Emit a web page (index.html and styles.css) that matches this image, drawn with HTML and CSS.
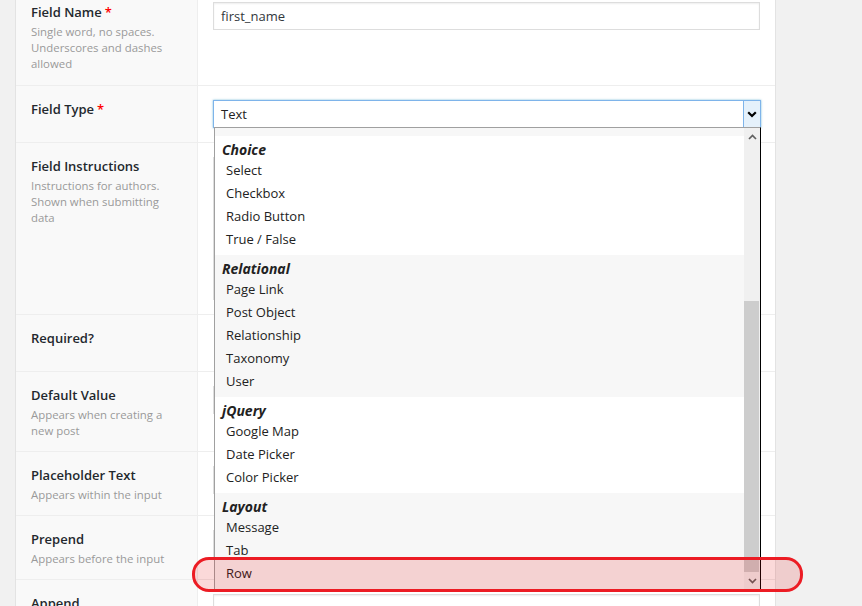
FILE: index.html
```html
<!DOCTYPE html>
<html lang="en">
<head>
<meta charset="utf-8">
<title>Field settings</title>
<link rel="stylesheet" href="styles.css">
</head>
<body>
<div class="wrap">
  <div class="settings">
    <div class="row first">
      <div class="label">
        <div class="lt">Field Name<span class="req">*</span></div>
        <div class="desc">Single word, no spaces.<br>Underscores and dashes<br>allowed</div>
      </div>
      <div class="field tight">
        <div class="input">first_name</div>
      </div>
    </div>
    <div class="row">
      <div class="label">
        <div class="lt">Field Type<span class="req">*</span></div>
      </div>
      <div class="field">
        <div class="select-wrap">
          <div class="select">
            <span class="sel-text">Text</span>
            <span class="sel-btn">
              <svg width="10" height="7" viewBox="0 0 10 7"><polyline points="1.2,1.2 5,5 8.8,1.2" fill="none" stroke="#000" stroke-width="2.2"/></svg>
            </span>
          </div>
          <div class="listbox">
            <div class="list">
              <div class="tail"></div>
              <div class="group">
                <div class="gh">Choice</div>
                <div class="opt">Select</div>
                <div class="opt">Checkbox</div>
                <div class="opt">Radio Button</div>
                <div class="opt">True / False</div>
              </div>
              <div class="group alt">
                <div class="gh">Relational</div>
                <div class="opt">Page Link</div>
                <div class="opt">Post Object</div>
                <div class="opt">Relationship</div>
                <div class="opt">Taxonomy</div>
                <div class="opt">User</div>
              </div>
              <div class="group">
                <div class="gh">jQuery</div>
                <div class="opt">Google Map</div>
                <div class="opt">Date Picker</div>
                <div class="opt">Color Picker</div>
              </div>
              <div class="group alt">
                <div class="gh">Layout</div>
                <div class="opt">Message</div>
                <div class="opt">Tab</div>
                <div class="opt">Row</div>
              </div>
            </div>
            <div class="scrollbar">
              <div class="sb-btn">
                <svg width="9" height="6" viewBox="0 0 9 6"><polyline points="1,5 4.5,1.5 8,5" fill="none" stroke="#606060" stroke-width="1.7"/></svg>
              </div>
              <div class="track"><div class="thumb"></div></div>
              <div class="sb-btn">
                <svg width="9" height="6" viewBox="0 0 9 6"><polyline points="1,1 4.5,4.5 8,1" fill="none" stroke="#606060" stroke-width="1.7"/></svg>
              </div>
            </div>
          </div>
        </div>
      </div>
    </div>
    <div class="row">
      <div class="label">
        <div class="lt">Field Instructions</div>
        <div class="desc">Instructions for authors.<br>Shown when submitting<br>data</div>
      </div>
      <div class="field">
        <div class="textarea"></div>
      </div>
    </div>
    <div class="row">
      <div class="label">
        <div class="lt">Required?</div>
      </div>
      <div class="field">
        <div class="spacer"></div>
      </div>
    </div>
    <div class="row">
      <div class="label">
        <div class="lt">Default Value</div>
        <div class="desc">Appears when creating a<br>new post</div>
      </div>
      <div class="field">
        <div class="input"></div>
      </div>
    </div>
    <div class="row">
      <div class="label">
        <div class="lt">Placeholder Text</div>
        <div class="desc">Appears within the input</div>
      </div>
      <div class="field">
        <div class="input"></div>
      </div>
    </div>
    <div class="row">
      <div class="label">
        <div class="lt">Prepend</div>
        <div class="desc">Appears before the input</div>
      </div>
      <div class="field">
        <div class="input"></div>
      </div>
    </div>
    <div class="row">
      <div class="label">
        <div class="lt">Append</div>
        <div class="desc">Appears after the input</div>
      </div>
      <div class="field">
        <div class="input"></div>
      </div>
    </div>
  </div>
</div>
<div class="highlight"></div>
</body>
</html>
```
FILE: styles.css
```css
* { box-sizing: border-box; }
html, body { margin: 0; padding: 0; }
body {
  background: #f1f1f1;
  font-family: "Open Sans", "Noto Sans", sans-serif;
  color: #32373c;
  height: 606px;
  overflow: hidden;
  position: relative;
}
.wrap { padding-left: 15px; }
.settings {
  width: 761px;
  margin-top: -10px;
  background: #fff;
  border-left: 1px solid #e3e3e3;
  border-right: 1px solid #e3e3e3;
}
.row {
  display: grid;
  grid-template-columns: 182px 1fr;
  border-top: 1px solid #eeeeee;
}
.row.first { border-top: 0; }
.label {
  background: #f9f9f9;
  border-right: 1px solid #eeeeee;
  padding: 15px 15px 12px;
}
.row.first .label { padding-top: 14px; padding-bottom: 13px; }
.lt {
  font-size: 13px;
  font-weight: 600;
  line-height: 16px;
  height: 16px;
  color: #23282d;
}
.req { color: #f00; margin-left: 3px; }
.desc {
  margin-top: 4px;
  font-size: 11.4px;
  line-height: 16px;
  color: #999;
}
.field { padding: 14px 15px; }
.field.tight { padding-top: 12px; }
.input {
  height: 28px;
  border: 1px solid #ddd;
  box-shadow: inset 0 1px 2px rgba(0,0,0,.07);
  font-size: 13px;
  line-height: 26px;
  padding-left: 7px;
  color: #32373c;
  background: #fff;
}
.textarea {
  height: 143px;
  border: 1px solid #ddd;
  box-shadow: inset 0 1px 2px rgba(0,0,0,.07);
}
.spacer { height: 28px; }
.select-wrap { position: relative; }
.select {
  display: flex;
  width: 548px;
  height: 28px;
  border: 1px solid #7eb4ea;
  box-shadow: 0 0 2px rgba(30,140,190,.6);
  background: #fff;
}
.sel-text {
  flex: 1;
  font-size: 13px;
  line-height: 26px;
  padding-left: 7px;
  color: #222;
}
.sel-btn {
  width: 17px;
  background: #e5f1fb;
  border-left: 1px solid #7eb4ea;
  display: flex;
  align-items: center;
  justify-content: center;
}
.listbox {
  position: absolute;
  z-index: 10;
  left: 1px;
  top: 27px;
  width: 547px;
  height: 463px;
  border-top: 1px solid #a0a0a0;
  border-left: 1px solid #a0a0a0;
  border-right: 1px solid #000;
  border-bottom: 1px solid #000;
  background: #fff;
  display: flex;
}
.list { flex: 1; overflow: hidden; }
.tail { height: 8px; background: #f7f7f7; }
.group { padding-bottom: 4px; background: #fff; }
.group.alt { background: #f7f7f7; }
.gh {
  font-size: 14px;
  font-weight: 700;
  font-style: italic;
  line-height: 18px;
  padding: 5px 0 0 7px;
  color: #222;
}
.opt {
  font-size: 13px;
  line-height: 23px;
  padding-left: 11px;
  color: #222;
}
.scrollbar {
  width: 16px;
  background: #f0f0f0;
  display: flex;
  flex-direction: column;
}
.sb-btn {
  height: 17px;
  display: flex;
  align-items: center;
  justify-content: center;
}
.track { flex: 1; }
.thumb {
  margin-top: 156px;
  height: 271px;
  width: 15px;
  background: #cdcdcd;
}
.highlight {
  position: absolute;
  left: 192px;
  top: 557px;
  width: 611px;
  height: 35px;
  border: 3px solid #ec1c24;
  border-radius: 17px;
  background: rgba(225, 0, 0, 0.15);
  z-index: 20;
}
```
